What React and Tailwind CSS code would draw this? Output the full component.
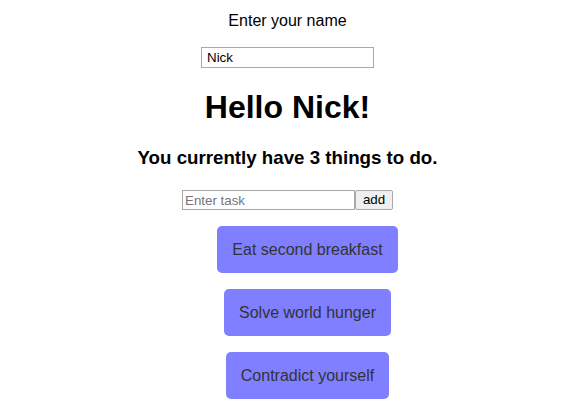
export default function App() {
  const tasks = ["Eat second breakfast", "Solve world hunger", "Contradict yourself"];
  return (
    <div className="flex flex-col items-center pl-[6px] text-black" style={{ fontFamily: '"Liberation Sans", Arial, sans-serif' }}>
      <p className="mt-[12px] text-[16px] leading-[18px]">Enter your name</p>
      <input
        className="mt-[17px] h-[21px] w-[173px] border border-[#a9a9a9] px-[5px] text-[13.33px] leading-[19px] outline-none"
        style={{ fontFamily: '"Liberation Sans", Arial, sans-serif' }}
        defaultValue="Nick"
      />
      <h1 className="mt-[21px] text-[32px] font-bold leading-[37px]">Hello Nick!</h1>
      <h3 className="mt-[21px] text-[18.72px] font-bold leading-[22px]">You currently have 3 things to do.</h3>
      <div className="mt-[21px] flex h-[20px]">
        <input
          className="h-[20px] w-[173px] border border-[#a9a9a9] px-[2px] text-[13.33px] placeholder-[#757575] outline-none"
          style={{ fontFamily: '"Liberation Sans", Arial, sans-serif' }}
          placeholder="Enter task"
        />
        <button
          className="h-[20px] w-[38px] rounded-[2px] border border-[#a9a9a9] bg-[#efefef] text-[13.33px] leading-[18px] text-black"
          style={{ fontFamily: '"Liberation Sans", Arial, sans-serif' }}
        >
          add
        </button>
      </div>
      <ul className="mt-[16px] flex flex-col items-center gap-[16px] pl-[40px]">
        {tasks.map((t) => (
          <li key={t} className="h-[47px] rounded-[5px] bg-[#7f7fff] px-[15px] text-[16px] leading-[47px] text-[#333333]">
            {t}
          </li>
        ))}
      </ul>
    </div>
  );
}
